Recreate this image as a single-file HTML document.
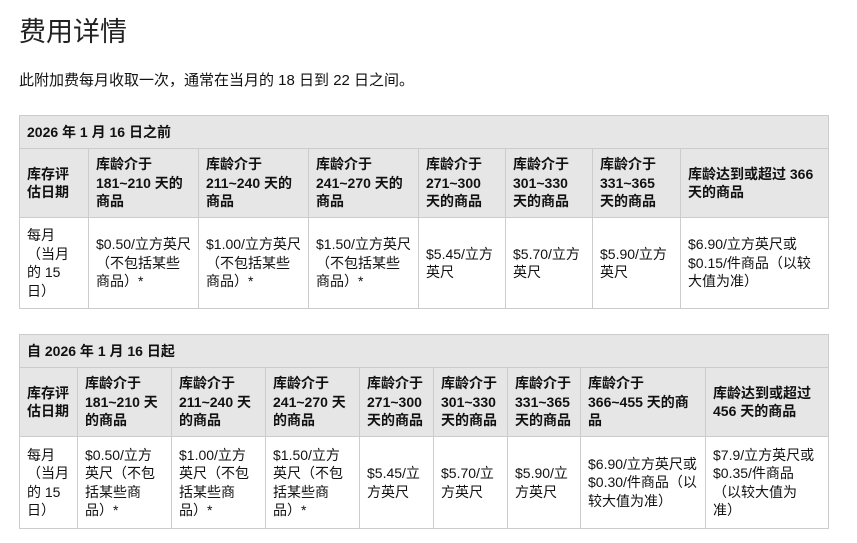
<!DOCTYPE html>
<html><head><meta charset="utf-8"><style>
body{margin:0;background:#fff;font-family:"Liberation Sans","Noto Sans CJK SC",sans-serif;color:#111;}
h1{position:absolute;left:19px;top:13px;margin:0;font-weight:normal;font-size:27px;line-height:38px;color:#222;}
p{position:absolute;left:19px;top:71px;margin:0;font-size:15px;line-height:20px;}
table{position:absolute;left:19px;border-collapse:collapse;table-layout:fixed;font-size:14px;line-height:18.5px;}
td,th{border:1px solid #ccc;padding:0 7px;vertical-align:middle;text-align:left;overflow:hidden;white-space:nowrap;}
th{background:#e6e6e6;font-weight:bold;}
tr.cap th{height:32px;}
</style></head><body>
<h1>费用详情</h1>
<p>此附加费每月收取一次，通常在当月的 18 日到 22 日之间。</p>
<table style="top:115px;width:809px">
<colgroup><col style="width:69px"><col style="width:110px"><col style="width:110px"><col style="width:110px"><col style="width:87px"><col style="width:87px"><col style="width:88px"><col style="width:148px"></colgroup>
<tr class="cap"><th colspan="8">2026 年 1 月 16 日之前</th></tr>
<tr style="height:69px"><th>库存评<br>估日期</th><th>库龄介于<br>181~210 天的<br>商品</th><th>库龄介于<br>211~240 天的<br>商品</th><th>库龄介于<br>241~270 天的<br>商品</th><th>库龄介于<br>271~300<br>天的商品</th><th>库龄介于<br>301~330<br>天的商品</th><th>库龄介于<br>331~365<br>天的商品</th><th>库龄达到或超过 366<br>天的商品</th></tr>
<tr style="height:91px"><td>每月<br>（当月<br>的 15<br>日）</td><td>$0.50/立方英尺<br>（不包括某些<br>商品）*</td><td>$1.00/立方英尺<br>（不包括某些<br>商品）*</td><td>$1.50/立方英尺<br>（不包括某些<br>商品）*</td><td>$5.45/立方<br>英尺</td><td>$5.70/立方<br>英尺</td><td>$5.90/立方<br>英尺</td><td>$6.90/立方英尺或<br>$0.15/件商品（以较<br>大值为准）</td></tr>
</table>
<table style="top:334px;width:809px">
<colgroup><col style="width:58px"><col style="width:94px"><col style="width:94px"><col style="width:94px"><col style="width:74px"><col style="width:74px"><col style="width:73px"><col style="width:125px"><col style="width:123px"></colgroup>
<tr class="cap"><th colspan="9">自 2026 年 1 月 16 日起</th></tr>
<tr style="height:69px"><th>库存评<br>估日期</th><th>库龄介于<br>181~210 天<br>的商品</th><th>库龄介于<br>211~240 天<br>的商品</th><th>库龄介于<br>241~270 天<br>的商品</th><th>库龄介于<br>271~300<br>天的商品</th><th>库龄介于<br>301~330<br>天的商品</th><th>库龄介于<br>331~365<br>天的商品</th><th>库龄介于<br>366~455 天的商<br>品</th><th>库龄达到或超过<br>456 天的商品</th></tr>
<tr style="height:92px"><td>每月<br>（当月<br>的 15<br>日）</td><td>$0.50/立方<br>英尺（不包<br>括某些商<br>品）*</td><td>$1.00/立方<br>英尺（不包<br>括某些商<br>品）*</td><td>$1.50/立方<br>英尺（不包<br>括某些商<br>品）*</td><td>$5.45/立<br>方英尺</td><td>$5.70/立<br>方英尺</td><td>$5.90/立<br>方英尺</td><td>$6.90/立方英尺或<br>$0.30/件商品（以<br>较大值为准）</td><td>$7.9/立方英尺或<br>$0.35/件商品<br>（以较大值为<br>准）</td></tr>
</table>
</body></html>
